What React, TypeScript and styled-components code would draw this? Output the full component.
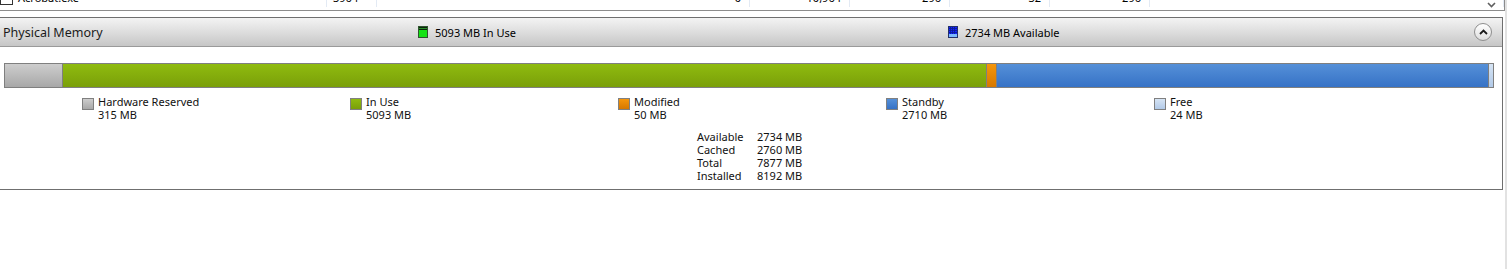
import React from 'react';
import styled, { createGlobalStyle } from 'styled-components';

const GlobalStyle = createGlobalStyle`
  html, body {
    margin: 0;
    padding: 0;
    background: #fff;
  }
  body {
    font-family: 'Noto Sans', 'Segoe UI', sans-serif;
    font-size: 11px;
    color: #000;
  }
`;

interface segment {
  label: string;
  mb: number;
  top: string;
  bottom: string;
};

const SEGMENTS: segment[] = [
  { label: 'Hardware Reserved', mb: 315, top: '#cdcdcd', bottom: '#a8a8a8' },
  { label: 'In Use', mb: 5093, top: '#8fbb0f', bottom: '#7a9f09' },
  { label: 'Modified', mb: 50, top: '#f5960c', bottom: '#d67800' },
  { label: 'Standby', mb: 2710, top: '#5590d8', bottom: '#3672c6' },
  { label: 'Free', mb: 24, top: '#d6e4f4', bottom: '#b2cae8' },
];

const STATS: [string, string][] = [
  ['Available', '2734 MB'],
  ['Cached', '2760 MB'],
  ['Total', '7877 MB'],
  ['Installed', '8192 MB'],
];

// the process row above is scrolled almost out of view
const ROW_CELLS = ['Acrobat.exe', '3964', '0', '10,964', '296', '32', '296', ''];

const InUseIcon = () => (
  <svg width="10" height="12" viewBox="0 0 10 12">
    <rect x="0.5" y="0.5" width="9" height="11" fill="#16e316" stroke="#2f552f" />
    <rect x="1" y="1" width="8" height="3" fill="#0c260c" />
    {[1.5, 3.5, 5.5, 7.5].map((x) => (
      <rect key={x} x={x} y="2" width="1" height="1" fill="#44ff44" />
    ))}
  </svg>
);

const AvailableIcon = () => (
  <svg width="10" height="12" viewBox="0 0 10 12">
    <rect x="0.5" y="0.5" width="9" height="11" fill="#7ab8ff" stroke="#22306a" />
    <rect x="1" y="1" width="8" height="7" fill="#1424ff" />
    {[2.5, 4.5, 6.5].map((x) => (
      <line key={'v' + x} x1={x} y1="1" x2={x} y2="8" stroke="#0a1a90" strokeWidth="0.8" />
    ))}
    {[2.5, 4.5, 6.5].map((y) => (
      <line key={'h' + y} x1="1" y1={y} x2="9" y2={y} stroke="#0a1a90" strokeWidth="0.8" />
    ))}
  </svg>
);

const App: React.FC = () => {
  return (
    <>
      <GlobalStyle />
      <Page>
        <Main>
          <ProcessList>
            <ProcessRow>
              {ROW_CELLS.map((cell, i) => (
                <Cell key={i} $first={i === 0} $left={i < 2}>
                  {i === 0 && <CheckBox />}
                  {cell}
                </Cell>
              ))}
            </ProcessRow>
            <ScrollArrow>
              <svg width="9" height="6" viewBox="0 0 9 6">
                <path d="M1 1 L4.5 4.5 L8 1" fill="none" stroke="#606060" strokeWidth="1.6" />
              </svg>
            </ScrollArrow>
          </ProcessList>

          <Panel>
            <Header>
              <Title>Physical Memory</Title>
              <Indicator>
                <InUseIcon />
                5093 MB In Use
              </Indicator>
              <Indicator>
                <AvailableIcon />
                2734 MB Available
              </Indicator>
              <CollapseButton>
                <svg width="9" height="6" viewBox="0 0 9 6">
                  <path d="M1 5 L4.5 1.5 L8 5" fill="none" stroke="#1a1a1a" strokeWidth="1.8" />
                </svg>
              </CollapseButton>
            </Header>

            <Body>
              <Bar>
                {SEGMENTS.map((s) => (
                  <Segment key={s.label} style={{ flexGrow: s.mb }} $top={s.top} $bottom={s.bottom} />
                ))}
              </Bar>

              <Legend>
                {SEGMENTS.map((s) => (
                  <LegendItem key={s.label}>
                    <Swatch $top={s.top} $bottom={s.bottom} />
                    <LegendText>
                      <span>{s.label}</span>
                      <span>{s.mb} MB</span>
                    </LegendText>
                  </LegendItem>
                ))}
              </Legend>

              <Stats>
                {STATS.map(([k, v]) => (
                  <React.Fragment key={k}>
                    <span>{k}</span>
                    <span>{v}</span>
                  </React.Fragment>
                ))}
              </Stats>
            </Body>
          </Panel>
        </Main>
        <ScrollStrip />
      </Page>
    </>
  );
};

export default App;

const Page = styled.div`
  display: flex;
  width: 1507px;
  height: 269px;
  overflow: hidden;
`;
const Main = styled.div`
  display: flex;
  flex-direction: column;
  width: 1505px;
`;
const ScrollStrip = styled.div`
  width: 2px;
  background: #e2e2e2;
`;
const ProcessList = styled.div`
  position: relative;
  height: 10px;
  overflow: hidden;
  border-bottom: 1px solid #8c8c8c;
  border-right: 1px solid #8c8c8c;
`;
const ProcessRow = styled.div`
  display: grid;
  grid-template-columns: 327px 50px 373px 100px 100px 100px 100px 1fr;
  height: 18px;
  margin-top: -11px;
  line-height: 18px;
`;
const Cell = styled.div<{ $first?: boolean; $left?: boolean }>`
  display: flex;
  align-items: center;
  justify-content: ${(p) => (p.$left ? 'flex-start' : 'flex-end')};
  gap: 5px;
  padding: ${(p) => (p.$first ? '0' : '0 8px 0 6px')};
  border-right: 1px solid #e3eaf4;
  white-space: nowrap;
`;
const CheckBox = styled.span`
  display: inline-block;
  width: 11px;
  height: 11px;
  border: 1px solid #333;
  background: #fff;
`;
const ScrollArrow = styled.div`
  position: absolute;
  right: 8px;
  top: 2px;
  display: flex;
`;
const Panel = styled.section`
  margin: 6px 2px 0 -1px;
  border: 1px solid #6f6f6f;
  display: flex;
  flex-direction: column;
`;
const Header = styled.header`
  display: grid;
  grid-template-columns: 415px 530px 1fr auto;
  align-items: center;
  height: 28px;
  padding: 0 10px 0 3px;
  background: linear-gradient(#f3f3f3, #e2e2e2 40%, #c6c6c6);
  border-bottom: 1px solid #9a9a9a;
`;
const Title = styled.div`
  font-size: 12.5px;
  color: #1a1a1a;
`;
const Indicator = styled.div`
  display: flex;
  align-items: center;
  gap: 7px;
  font-size: 11px;
  svg {
    display: block;
  }
`;
const CollapseButton = styled.button`
  display: flex;
  align-items: center;
  justify-content: center;
  width: 18px;
  height: 18px;
  padding: 0;
  border-radius: 50%;
  border: 1px solid #8e8e8e;
  background: linear-gradient(#ffffff, #dedede);
`;
const Body = styled.div`
  display: flex;
  flex-direction: column;
  padding: 16px 8px 7px 4px;
`;
const Bar = styled.div`
  display: flex;
  height: 23px;
  border: 1px solid #7f7f7f;
`;
const Segment = styled.div<{ $top: string; $bottom: string }>`
  flex-basis: 0;
  background: linear-gradient(${(p) => p.$top}, ${(p) => p.$bottom});
  & + & {
    border-left: 1px solid #7f7f7f;
  }
`;
const Legend = styled.div`
  display: grid;
  grid-template-columns: repeat(5, 268px);
  padding-left: 78px;
  margin-top: 7px;
  line-height: 13px;
`;
const LegendItem = styled.div`
  display: flex;
  align-items: flex-start;
  gap: 4px;
`;
const Swatch = styled.span<{ $top: string; $bottom: string }>`
  width: 10px;
  height: 10px;
  margin-top: 3px;
  border: 1px solid #808080;
  background: linear-gradient(${(p) => p.$top}, ${(p) => p.$bottom});
`;
const LegendText = styled.div`
  display: flex;
  flex-direction: column;
  color: #111;
`;
const Stats = styled.div`
  display: grid;
  grid-template-columns: 60px auto;
  align-self: flex-start;
  margin: 9px 0 0 693px;
  line-height: 13px;
  color: #111;
`;
